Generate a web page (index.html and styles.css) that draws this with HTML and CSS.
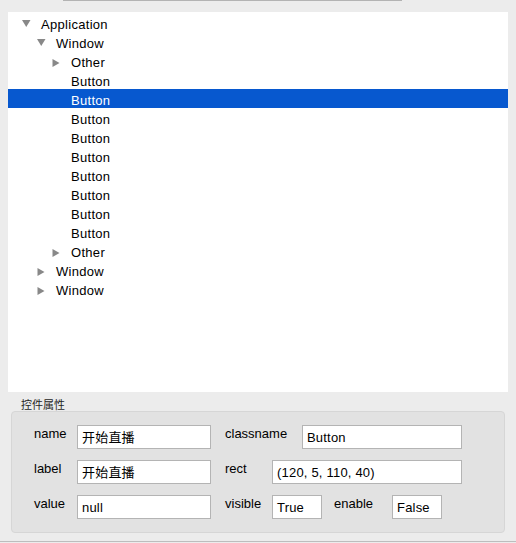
FILE: index.html
```html
<!DOCTYPE html>
<html>
<head>
<meta charset="utf-8">
<link rel="stylesheet" href="styles.css">
</head>
<body>
<div class="topbar"><div class="scrollline"></div></div>
<div class="tree">
  <div class="row l0"><span class="twisty"><svg class="down" width="9" height="7" viewBox="0 0 9 7"><polygon points="0,0 8.5,0 4.25,7" /></svg></span><span class="name">Application</span></div>
  <div class="row l1"><span class="twisty"><svg class="down" width="9" height="7" viewBox="0 0 9 7"><polygon points="0,0 8.5,0 4.25,7" /></svg></span><span class="name">Window</span></div>
  <div class="row l2"><span class="twisty"><svg class="right" width="8" height="8" viewBox="0 0 8 8"><polygon points="0.5,0 7.5,4 0.5,8" /></svg></span><span class="name">Other</span></div>
  <div class="row l2"><span class="twisty"></span><span class="name">Button</span></div>
  <div class="row l2 selected"><span class="twisty"></span><span class="name">Button</span></div>
  <div class="row l2"><span class="twisty"></span><span class="name">Button</span></div>
  <div class="row l2"><span class="twisty"></span><span class="name">Button</span></div>
  <div class="row l2"><span class="twisty"></span><span class="name">Button</span></div>
  <div class="row l2"><span class="twisty"></span><span class="name">Button</span></div>
  <div class="row l2"><span class="twisty"></span><span class="name">Button</span></div>
  <div class="row l2"><span class="twisty"></span><span class="name">Button</span></div>
  <div class="row l2"><span class="twisty"></span><span class="name">Button</span></div>
  <div class="row l2"><span class="twisty"><svg class="right" width="8" height="8" viewBox="0 0 8 8"><polygon points="0.5,0 7.5,4 0.5,8" /></svg></span><span class="name">Other</span></div>
  <div class="row l1"><span class="twisty"><svg class="right" width="8" height="8" viewBox="0 0 8 8"><polygon points="0.5,0 7.5,4 0.5,8" /></svg></span><span class="name">Window</span></div>
  <div class="row l1"><span class="twisty"><svg class="right" width="8" height="8" viewBox="0 0 8 8"><polygon points="0.5,0 7.5,4 0.5,8" /></svg></span><span class="name">Window</span></div>
</div>
<div class="group-title">控件属性</div>
<div class="group">
  <div class="prow">
    <span class="plabel w-first">name</span>
    <span class="field w-134">开始直播</span>
    <span class="plabel w-77">classname</span>
    <span class="field w-160">Button</span>
  </div>
  <div class="prow">
    <span class="plabel w-first">label</span>
    <span class="field w-134">开始直播</span>
    <span class="plabel w-47">rect</span>
    <span class="field w-190">(120, 5, 110, 40)</span>
  </div>
  <div class="prow">
    <span class="plabel w-first">value</span>
    <span class="field w-134">null</span>
    <span class="plabel w-47">visible</span>
    <span class="field w-50">True</span>
    <span class="plabel w-enable">enable</span>
    <span class="field w-50">False</span>
  </div>
</div>
<div class="bottomline"></div>
</body>
</html>
```
FILE: styles.css
```css
html, body {
  margin: 0;
  padding: 0;
}
body {
  width: 516px;
  height: 543px;
  background: #ececec;
  font-family: "Liberation Sans", Arial, "Noto Sans CJK SC", sans-serif;
  font-size: 13px;
  color: #000;
  overflow: hidden;
}
.topbar {
  height: 12px;
}
.scrollline {
  margin-left: 63px;
  width: 339px;
  height: 1px;
  background: #b3b3b3;
}
.tree {
  margin: 0 8px;
  height: 379px;
  padding-top: 1px;
  background: #fff;
}
.row {
  height: 19px;
  display: flex;
  align-items: flex-start;
  letter-spacing: 0.3px;
  box-sizing: border-box;
}
.row .name {
  line-height: 19px;
  padding-top: 2px;
}
.row.l0 { padding-left: 14px; }
.row.l1 { padding-left: 29px; }
.row.l2 { padding-left: 44px; }
.twisty {
  width: 19px;
  height: 19px;
  flex-shrink: 0;
}
.twisty svg {
  fill: #888888;
  display: block;
}
.twisty svg.down { margin-top: 7px; }
.twisty svg.right { margin-top: 8px; }
.row.selected {
  background: #0758cf;
  color: #fff;
}
.group-title {
  height: 19px;
  padding-left: 21px;
  font-size: 11px;
  line-height: 24px;
  color: #262626;
  font-family: "Noto Sans CJK SC", sans-serif;
}
.group {
  margin: 0 11px;
  background: #e2e2e2;
  border: 1px solid #d6d6d6;
  border-radius: 4px;
  padding: 13px 0 0 22px;
  box-sizing: border-box;
  height: 122px;
  display: flex;
  flex-direction: column;
  gap: 11px;
}
.prow {
  display: flex;
  align-items: flex-start;
  height: 24px;
}
.plabel {
  line-height: 18px;
  height: 24px;
  flex-shrink: 0;
}
.w-first { width: 43px; }
.w-77 { width: 77px; margin-left: 14px; }
.w-47 { width: 47px; margin-left: 14px; }
.w-enable { width: 58px; margin-left: 12px; }
.field {
  height: 24px;
  box-sizing: border-box;
  border: 1px solid #b4b4b4;
  background: #fff;
  padding: 0 4px;
  line-height: 24px;
  flex-shrink: 0;
  font-family: "Liberation Sans", Arial, "Noto Sans CJK SC", sans-serif;
  letter-spacing: 0.2px;
  white-space: nowrap;
  overflow: hidden;
}
.w-134 { width: 134px; }
.w-160 { width: 160px; }
.w-190 { width: 190px; }
.w-50 { width: 50px; }
.bottomline {
  margin-top: 8px;
  height: 1px;
  background: #bdbdbd;
}
```
